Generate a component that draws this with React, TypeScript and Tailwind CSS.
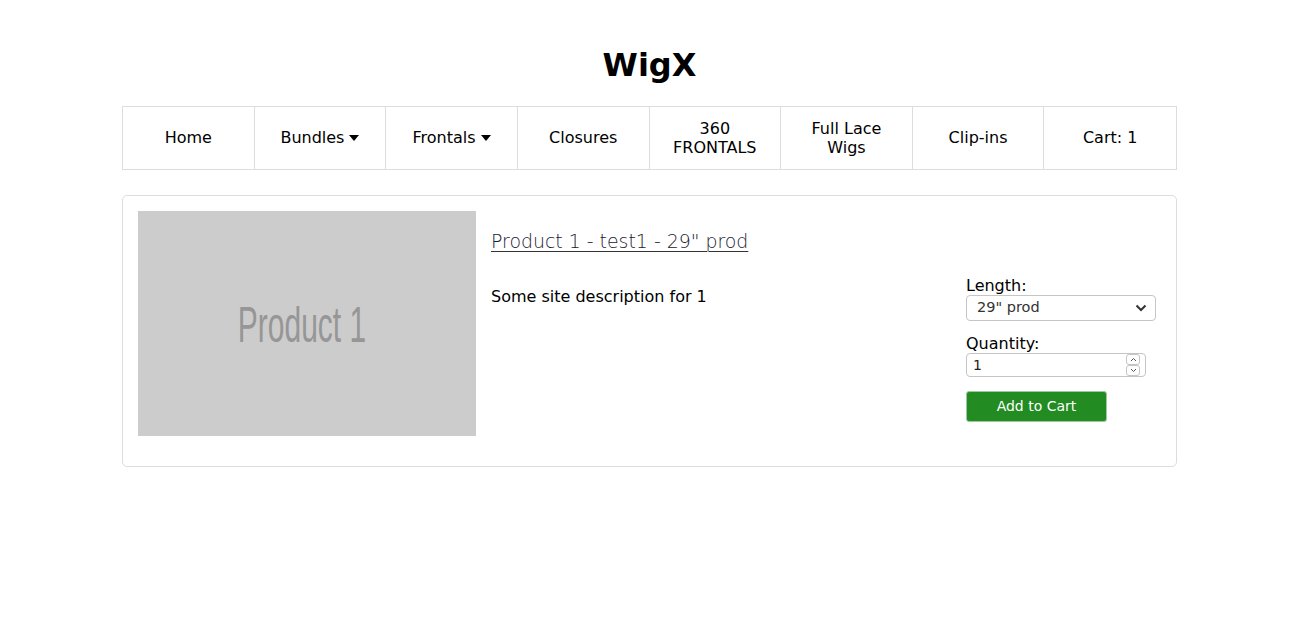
import React from "react";

const navItems: { label: React.ReactNode; caret?: boolean }[] = [
  { label: "Home" },
  { label: "Bundles", caret: true },
  { label: "Frontals", caret: true },
  { label: "Closures" },
  { label: <>360<br />FRONTALS</> },
  { label: <>Full Lace<br />Wigs</> },
  { label: "Clip-ins" },
  { label: "Cart: 1" },
];

function Caret() {
  return (
    <svg width="10" height="6" viewBox="0 0 10 6" className="ml-[5px] inline-block">
      <path d="M0 0 L10 0 L5 6 Z" fill="#000" />
    </svg>
  );
}

export default function App() {
  return (
    <div className="min-h-[630px] bg-white text-black font-['DejaVu_Sans',sans-serif]">
      <div className="mx-auto w-[1055px]">
        <h1 className="pt-[47px] pb-[22px] text-center text-[32px] leading-[37px] font-bold font-['DejaVu_Sans',sans-serif]">
          WigX
        </h1>
        <nav className="grid grid-cols-8 h-[64px] border border-[#dddddd]">
          {navItems.map((it, i) => (
            <div
              key={i}
              className={
                "flex items-center justify-center text-center text-[16px] leading-[19px] pb-[1px] " +
                (i < navItems.length - 1 ? "border-r border-[#dddddd]" : "")
              }
            >
              <span>{it.label}</span>
              {it.caret && <Caret />}
            </div>
          ))}
        </nav>
        <div className="mt-[25px] flex border border-[#dddddd] rounded-[5px] pt-[15px] pl-[15px] pr-[20px] pb-[30px]">
          <div className="w-[338px] h-[225px] shrink-0 bg-[#cccccc] flex items-center justify-center overflow-hidden">
            <span className="inline-block text-[#969696] text-[50px] leading-none font-['Liberation_Sans',Arial,sans-serif] scale-x-[0.6] mt-[2px] -ml-[10px]">
              Product 1
            </span>
          </div>
          <div className="flex-1 pl-[15px]">
            <h3 className="mt-[19px] text-[18.9px] leading-[22px] font-extralight text-[#1a2030]">
              <a href="#" className="underline underline-offset-[3px] decoration-1 decoration-[#333]">Product 1 - test1 - 29" prod</a>
            </h3>
            <p className="mt-[35px] text-[16px] leading-[19px]">Some site description for 1</p>
          </div>
          <div className="w-[190px] shrink-0 pt-[65px]">
            <div className="text-[16px] leading-[19px]">Length:</div>
            <div className="h-[26px] w-[190px] border border-[#c5c5c5] rounded-[4px] flex items-center justify-between pl-[10px] pr-[8px] text-[14.5px] text-[#333]">
              <span>29" prod</span>
              <svg width="12" height="8" viewBox="0 0 12 8">
                <path d="M1.5 1.5 L6 6 L10.5 1.5" fill="none" stroke="#333" strokeWidth="2" />
              </svg>
            </div>
            <div className="mt-[13px] text-[16px] leading-[19px]">Quantity:</div>
            <div className="h-[24px] w-[180px] border border-[#c5c5c5] rounded-[4px] flex items-center justify-between pl-[6px] pr-[6px] text-[14px] text-[#222]">
              <span>1</span>
              <div className="flex flex-col gap-0 -mr-[1px]">
                <div className="w-[14px] h-[11px] border border-[#c5c5c5] rounded-[3px] flex items-center justify-center">
                  <svg width="7" height="5" viewBox="0 0 7 5"><path d="M1 4 L3.5 1.5 L6 4" fill="none" stroke="#555" strokeWidth="1" /></svg>
                </div>
                <div className="w-[14px] h-[11px] border border-[#c5c5c5] rounded-[3px] flex items-center justify-center">
                  <svg width="7" height="5" viewBox="0 0 7 5"><path d="M1 1 L3.5 3.5 L6 1" fill="none" stroke="#555" strokeWidth="1" /></svg>
                </div>
              </div>
            </div>
            <button className="mt-[14px] h-[31px] w-[141px] rounded-[3px] bg-[#228b22] border border-[#9fc89f] text-white text-[14px]">
              Add to Cart
            </button>
          </div>
        </div>
      </div>
    </div>
  );
}
